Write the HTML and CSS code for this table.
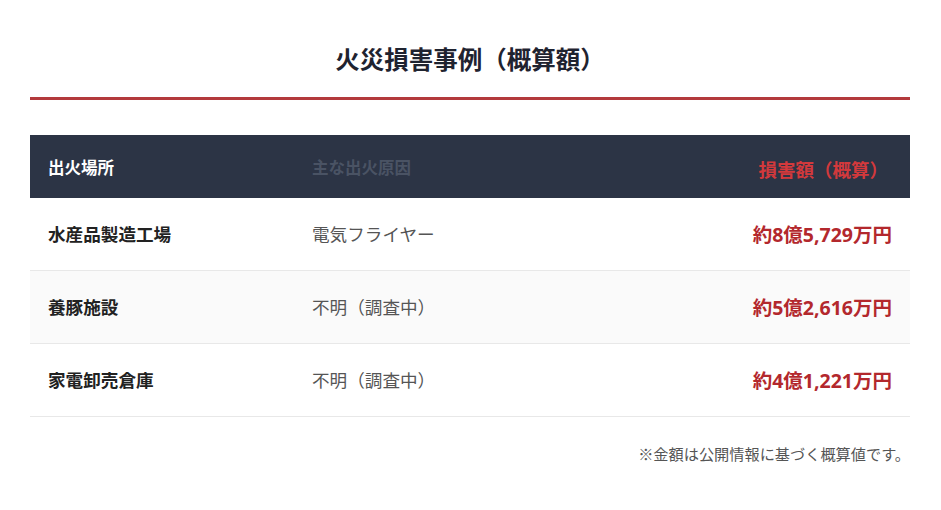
FILE: index.html
```html
<!DOCTYPE html>
<html lang="ja">
<head>
<meta charset="utf-8">
<title>火災損害事例（概算額）</title>
<link rel="stylesheet" href="styles.css">
</head>
<body>
<main class="page">
  <h1 class="title">火災損害事例（概算額）</h1>
  <table class="cases">
    <thead>
      <tr>
        <th class="col-place">出火場所</th>
        <th class="col-cause">主な出火原因</th>
        <th class="col-amount">損害額（概算）</th>
      </tr>
    </thead>
    <tbody>
      <tr>
        <td class="place">水産品製造工場</td>
        <td class="cause">電気フライヤー</td>
        <td class="amount">約8億5,729万円</td>
      </tr>
      <tr class="alt">
        <td class="place">養豚施設</td>
        <td class="cause">不明（調査中）</td>
        <td class="amount">約5億2,616万円</td>
      </tr>
      <tr>
        <td class="place">家電卸売倉庫</td>
        <td class="cause">不明（調査中）</td>
        <td class="amount">約4億1,221万円</td>
      </tr>
    </tbody>
  </table>
  <p class="note">※金額は公開情報に基づく概算値です。</p>
</main>
</body>
</html>
```

FILE: styles.css
```css
* { box-sizing: border-box; }
html, body { margin: 0; padding: 0; background: #fff; }
body {
  font-family: "Open Sans", "Noto Sans CJK JP", sans-serif;
  color: #222;
}
.page {
  padding: 0 31px 0 30px;
}
.title {
  margin: 0;
  padding-top: 40px;
  padding-bottom: 19px;
  text-align: center;
  font-family: "Noto Sans CJK JP", sans-serif;
  font-size: 24.5px;
  font-weight: 700;
  line-height: 38px;
  color: #1f2330;
  border-bottom: 3px solid #b33a3c;
}
.cases {
  width: 100%;
  margin-top: 35px;
  border-collapse: collapse;
  table-layout: fixed;
}
.cases th {
  height: 63px;
  background: #2c3445;
  font-family: "Noto Sans CJK JP", sans-serif;
  font-size: 16.5px;
  font-weight: 700;
  text-align: left;
  padding: 0 18px;
}
.col-place { width: 30%; color: #fff; }
.col-cause { width: 40%; color: #4a5364; }
.cases th.col-amount {
  text-align: right;
  color: #d3393c;
  font-size: 18.5px;
  padding-top: 4px;
  padding-right: 22px;
}
.cases td {
  height: 73px;
  padding: 0 18px;
  border-bottom: 1px solid #e8e8e8;
}
.cases tbody tr:first-child td { height: 72px; }
.cases tr.alt td { background: #fafafa; }
.place {
  font-family: "Noto Sans CJK JP", sans-serif;
  font-size: 17.6px;
  font-weight: 700;
  color: #222;
}
.cause {
  font-family: "Noto Sans CJK JP", sans-serif;
  font-size: 17.6px;
  font-weight: 400;
  color: #555;
}
.cases td.amount {
  text-align: right;
  font-size: 19.5px;
  font-weight: 700;
  color: #b3282d;
}
.note {
  margin: 25px 0 0 0;
  text-align: right;
  font-family: "Noto Sans CJK JP", sans-serif;
  font-size: 15.2px;
  color: #555;
}
```
